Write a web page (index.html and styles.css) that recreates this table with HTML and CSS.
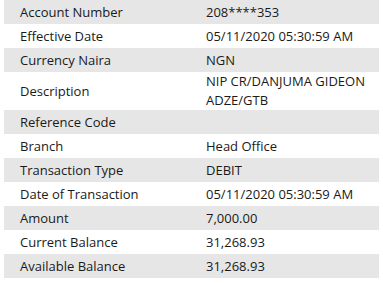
FILE: index.html
```html
<!DOCTYPE html>
<html lang="en">
<head>
  <meta charset="UTF-8">
  <meta name="viewport" content="width=device-width, initial-scale=1.0">
  <title>Transaction Details</title>
  <link rel="stylesheet" href="styles.css">
</head>
<body>
  <!-- Transaction details table -->
  <table class="details">
    <tbody>
      <tr><td>Account Number</td><td>208****353</td></tr>
      <tr><td>Effective Date</td><td>05/11/2020 05:30:59 AM</td></tr>
      <tr><td>Currency Naira</td><td>NGN</td></tr>
      <tr><td>Description</td><td>NIP CR/DANJUMA GIDEON ADZE/GTB</td></tr>
      <tr><td>Reference Code</td><td></td></tr>
      <tr><td>Branch</td><td>Head Office</td></tr>
      <tr><td>Transaction Type</td><td>DEBIT</td></tr>
      <tr><td>Date of Transaction</td><td>05/11/2020 05:30:59 AM</td></tr>
      <tr><td>Amount</td><td>7,000.00</td></tr>
      <tr><td>Current Balance</td><td>31,268.93</td></tr>
      <tr><td>Available Balance</td><td>31,268.93</td></tr>
    </tbody>
  </table>
</body>
</html>
```

FILE: styles.css
```css
/* General Styling */
body {
  background-color: #fff;
  color: #1a1a1a;
  font-family: "Open Sans", "Noto Sans", sans-serif;
  font-size: 13px;
  margin: 0;
  padding: 0 4px;
}

/* Details Table */
.details {
  width: 375px;
  border-collapse: collapse;
  table-layout: fixed;
}
.details td {
  height: 24px;
  padding: 0 16px;
  line-height: 19px;
  vertical-align: middle;
}
.details td:first-child {
  width: 154px;
}
.details td:last-child {
  padding-right: 2px;
}
.details tr:nth-child(odd) {
  background-color: #e6e6e6;
}
```
